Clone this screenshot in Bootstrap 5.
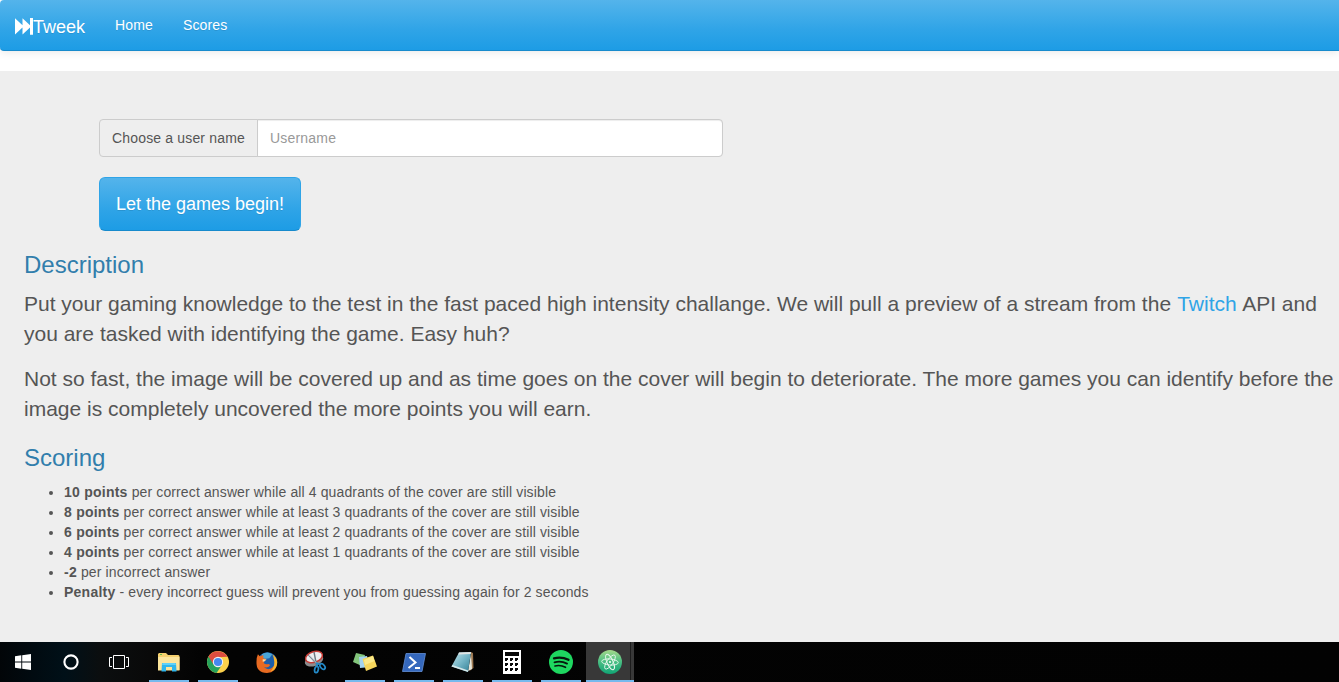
<!DOCTYPE html>
<html lang="en">
<head>
<meta charset="utf-8">
<title>Tweek</title>
<meta name="viewport" content="width=device-width, initial-scale=1">
<link href="https://cdn.jsdelivr.net/npm/bootstrap@5.3.0/dist/css/bootstrap.min.css" rel="stylesheet">
<style>
body{font:14px/20px "Liberation Sans",Arial,sans-serif;color:#555;background:#fff;height:682px;overflow:hidden}
.topnav{height:51px;border:0 solid #178acc;border-bottom-width:1px;border-radius:4px 0 0 4px;background:linear-gradient(#54b4eb,#2fa4e7 60%,#1d9ce5);box-shadow:0 1px 10px rgba(0,0,0,.1);margin-bottom:20px;padding:0 0 0 15px;flex-wrap:nowrap;justify-content:flex-start}
.topnav a{color:#fff;text-shadow:0 1px 0 rgba(0,0,0,.1);padding:0}
.topnav .navbar-brand{font-size:18px;line-height:20px;margin:3px 30px 0 0}
.topnav .nav-link{font-size:14px;line-height:20px;margin:0 30px 0 0;letter-spacing:.15px}
.hero{height:571px;background:#eee;padding:48px 0 0 24px}
.entry{padding-left:75px}
.entry .input-group{width:624px;height:38px}
.entry .input-group-text{font-size:14px;line-height:20px;padding:8px 12px;color:#555;background:#eee;border-color:#ccc;border-radius:4px;letter-spacing:.165px}
.entry .form-control{font-size:14px;line-height:20px;padding:8px 12px;border-color:#ccc;border-radius:4px;box-shadow:inset 0 1px 1px rgba(0,0,0,.075);letter-spacing:.2px}
.entry .form-control::placeholder{color:#999}
.btn-play{margin-top:20px;width:202px;height:54px;padding:0;border:1px solid #2fa4e7;border-bottom-color:#178acc;border-radius:6px;font-size:18px;line-height:26px;color:#fff;text-shadow:0 1px 0 rgba(0,0,0,.1);background:linear-gradient(#54b4eb,#2fa4e7 60%,#1d9ce5)}
.btn-play:hover{color:#fff}
.hero h2{font-size:24px;line-height:26px;color:#317eac;font-weight:400;margin:21px 0 11px}
.blurb{font-size:21px;line-height:30px;margin:0 0 15px;white-space:nowrap}
.blurb a{color:#2fa4e7;text-decoration:none;margin:0 .8px 0 .3px}
.rules{margin:0;padding-left:40px;letter-spacing:.125px}
.rules b{letter-spacing:.24px}
.taskbar{height:40px;background:linear-gradient(90deg,#020508,#001018 65px,#0b0e0f 100px,#090909 150px,#030303 200px,#020202)}
.task{width:49px;height:40px;display:flex;align-items:center;justify-content:center;flex:none}
.task svg{display:block}
.task.sys{width:48px}
.task.sys:first-child{width:47px;padding-right:1px}
.task.sys + .task:not(.sys){margin-left:1px}
.open{background:linear-gradient(#76b9ed,#76b9ed) 5px 38px/40px 2px no-repeat}
.active-app{width:48px;margin-left:1px;background:linear-gradient(#76b9ed,#76b9ed) 0 38px/48px 2px no-repeat,linear-gradient(90deg,#383838 44px,#1c1c1c 44px,#1c1c1c 45px,#383838 45px)}
</style>
</head>
<body>
<nav class="navbar topnav">
  <a class="navbar-brand d-flex align-items-center" href="#"><svg width="18" height="18" viewBox="0 0 18 18" fill="#fff"><path d="M0 .3l7.500 7V.3l7.500 7V0h3v16.700h-3V9.500l-7.500 7v-7L0 16.500z"/></svg>Tweek</a>
  <a class="nav-link" href="#">Home</a>
  <a class="nav-link" href="#">Scores</a>
</nav>
<main class="hero">
  <form class="entry">
    <div class="input-group">
      <span class="input-group-text">Choose a user name</span>
      <input class="form-control" type="text" placeholder="Username" aria-label="Username">
    </div>
    <button class="btn btn-play" type="button">Let the games begin!</button>
  </form>
  <h2>Description</h2>
  <p class="blurb">Put your gaming knowledge to the test in the fast paced high intensity challange. We will pull a preview of a stream from the <a href="#">Twitch</a> API and<br>you are tasked with identifying the game. Easy huh?</p>
  <p class="blurb">Not so fast, the image will be covered up and as time goes on the cover will begin to deteriorate. The more games you can identify before the<br>image is completely uncovered the more points you will earn.</p>
  <h2>Scoring</h2>
  <ul class="rules">
    <li><b>10 points</b> per correct answer while all 4 quadrants of the cover are still visible</li>
    <li><b>8 points</b> per correct answer while at least 3 quadrants of the cover are still visible</li>
    <li><b>6 points</b> per correct answer while at least 2 quadrants of the cover are still visible</li>
    <li><b>4 points</b> per correct answer while at least 1 quadrants of the cover are still visible</li>
    <li><b>-2</b> per incorrect answer</li>
    <li><b>Penalty</b> - every incorrect guess will prevent you from guessing again for 2 seconds</li>
  </ul>
</main>
<footer class="taskbar d-flex">
  <!-- Start -->
  <div class="task sys"><svg width="16" height="16" viewBox="0 0 16 16" fill="#fff"><path d="M0 2.2L6.3 1.3V7.5H0zM7.2 1.2L16 0v7.5H7.2zM0 8.5h6.3v6.2L0 13.8zM7.2 8.5H16V16l-8.8-1.2z"/></svg></div>
  <!-- Search -->
  <div class="task sys"><svg width="16" height="16" viewBox="0 0 16 16"><circle cx="8" cy="8" r="6.6" fill="none" stroke="#fff" stroke-width="2.1"/></svg></div>
  <!-- Task view -->
  <div class="task sys"><svg width="20" height="14" viewBox="0 0 20 14" fill="none" stroke="#fff"><path d="M4.5.5h11v13h-11zM3 2.5H.5v9H3M17 2.5h2.5v9H17"/></svg></div>
  <!-- Explorer -->
  <div class="task open"><svg width="22" height="20" viewBox="0 0 22 20"><path d="M0 2l1-1h7l2 2h10.500l1 1v14H0z" fill="#f4cf6d"/><path d="M0 5h21.500v13.500H0z" fill="#fbe49b"/><path d="M2 2h2v1H2z" fill="#65b94a"/><path d="M4 11h14l.5 8.500H14V15H8v4.500H3.500z" fill="#30b6ec"/><path d="M4.500 11h13l.5 2H4z" fill="#5ed1fa"/></svg></div>
  <!-- Chrome -->
  <div class="task open"><svg width="22" height="22" viewBox="0 0 22 22"><circle cx="11" cy="11" r="11" fill="#fbd04b"/><path d="M11 11L1.500 5.500A11 11 0 0 0 9.500 21.900L15.300 13.500z" fill="#25a25a"/><path d="M1.500 5.500a11 11 0 0 1 19 .3L11 6.200 6.500 13.500z" fill="#dc4d40"/><circle cx="11" cy="11" r="5.200" fill="#f3f3f3"/><circle cx="11" cy="11" r="4.100" fill="#4688ee"/></svg></div>
  <!-- Firefox -->
  <div class="task"><svg width="22" height="23" viewBox="0 0 23 23"><circle cx="12" cy="11" r="10.300" fill="#1b5eab"/><path d="M6 3q6-4 11 0l-3 4-7 1z" fill="#4aa5d8"/><path d="M2 3q1 1 2 2 2-1 4-1-1 2 0 3l3 1-2 2-1 2q2 2 5 1l2 1q-3 4-7 2 5 5 10 0 3-4 1-11 3 2 3 7Q21.500 22 11.500 22.500 0 22 .500 11 .500 6 2 3z" fill="#e76a21"/><path d="M17 3q7 5 4.500 12Q20 20 15 21q5-5 4-11 0-4-2-7z" fill="#f7b52e"/><path d="M7 8l4 .3-2 2-2 .5z" fill="#f9dca7"/></svg></div>
  <!-- Snipping Tool -->
  <div class="task"><svg width="23" height="24" viewBox="0 0 23 24"><ellipse cx="10" cy="10.500" rx="9.500" ry="5.500" transform="rotate(-20 10 10.500)" fill="#8a8c8e"/><ellipse cx="10" cy="7" rx="8.700" ry="5.300" transform="rotate(-18 10 7)" fill="#eceef0" stroke="#c63b35" stroke-width="1.500"/><path d="M4.500 5l9 9.500M10 2l2.500 13" stroke="#6c7982" stroke-width="1.400"/><path d="M5 5l8 8.500" stroke="#dfe7ed" stroke-width=".7"/><g fill="none" stroke="#2389c7" stroke-width="1.800"><ellipse cx="12.500" cy="19.500" rx="1.800" ry="3.200" transform="rotate(12 12.500 19.500)"/><ellipse cx="18.500" cy="16.500" rx="3.200" ry="2" transform="rotate(50 18.500 16.500)"/><path d="M12 13l4 1.500M13.500 13l-.8 4"/></g></svg></div>
  <!-- Sticky Notes -->
  <div class="task open"><svg width="24" height="20" viewBox="0 0 24 20"><path d="M3 1l9 2-3 11-9-4z" fill="#83c67c"/><path d="M6 5l8-1 3 11-10 1z" fill="#a4d3ef"/><path d="M9.500 7L20 3.500l4 11L13 19z" fill="#f6d65c"/><path d="M11 8l9-4 1.500 5L12 13z" fill="#fbe989"/></svg></div>
  <!-- PowerShell -->
  <div class="task open"><svg width="24" height="19" viewBox="0 0 24 19"><path d="M4 .5h19.500L20 18.500H.500z" fill="#3568bd" stroke="#6391d7" stroke-width=".8"/><path d="M7.500 4l6 5.500-7 5.500M13 15h5" fill="none" stroke="#fff" stroke-width="2"/></svg></div>
  <!-- Notepad -->
  <div class="task open"><svg width="24" height="22" viewBox="0 0 24 22"><defs><linearGradient id="pad" x2="1" y2="1"><stop stop-color="#c5e4ec"/><stop offset=".5" stop-color="#76b6c7"/><stop offset="1" stop-color="#2f7d93"/></linearGradient></defs><path d="M20 1l2 1 .5 15-4 3z" fill="#9b7750"/><path d="M20 3l1 15-4 2z" fill="#e5e4d9"/><path d="M8 1.500L20 1l-3 20L.500 15.500z" fill="url(#pad)"/><path d="M8 1.500L20 1l-.3 2L7.300 3.500z" fill="#e0e4e4"/><path d="M.500 15.500L17 21l.3-1.500L1.500 14z" fill="#d6e7ea"/></svg></div>
  <!-- Calculator -->
  <div class="task open"><svg width="18" height="24" viewBox="0 0 18 24"><path d="M0 0h18v24H0z" fill="#fff"/><path d="M2 2h14v4H2zM2 8h3v2H4v1H2zM7 8h3v2H9v1H7zM12 8h3v2h-1v1h-2zM2 13h3v2H4v1H2zM7 13h3v2H9v1H7zM12 13h3v2h-1v1h-2zM2 18h3v2H4v1H2zM7 18h3v2H9v1H7zM12 18h3v2h-1v1h-2z" fill="#080808"/></svg></div>
  <!-- Spotify -->
  <div class="task open"><svg width="24" height="24" viewBox="0 0 24 24"><circle cx="12" cy="12" r="12" fill="#1ed760"/><g fill="none" stroke="#07160c" stroke-linecap="round"><path d="M5 8.300q7.500-2 14.500 1.500" stroke-width="2.300"/><path d="M5.500 12.300q6.500-1.800 12.500 1.300" stroke-width="1.900"/><path d="M6 16q5.500-1.300 10.500 1.300" stroke-width="1.600"/></g></svg></div>
  <!-- Atom -->
  <div class="task active-app"><svg width="24" height="24" viewBox="0 0 24 24"><defs><linearGradient id="atom" x2="0" y2="1"><stop stop-color="#a5d98a"/><stop offset=".5" stop-color="#48bd83"/><stop offset="1" stop-color="#10a575"/></linearGradient></defs><circle cx="12" cy="12" r="12" fill="url(#atom)"/><g fill="none" stroke="#e9f8ee" stroke-width=".9"><ellipse cx="12" cy="12" rx="3" ry="8.300" transform="rotate(-25 12 12)"/><ellipse cx="12" cy="12" rx="3" ry="8.300" transform="rotate(35 12 12)"/><ellipse cx="12" cy="12" rx="3" ry="8.300" transform="rotate(95 12 12)"/></g><circle cx="12" cy="12" r="1" fill="#fff"/></svg></div>
</footer>
<script src="https://cdn.jsdelivr.net/npm/bootstrap@5.3.0/dist/js/bootstrap.bundle.min.js"></script>
</body>
</html>
